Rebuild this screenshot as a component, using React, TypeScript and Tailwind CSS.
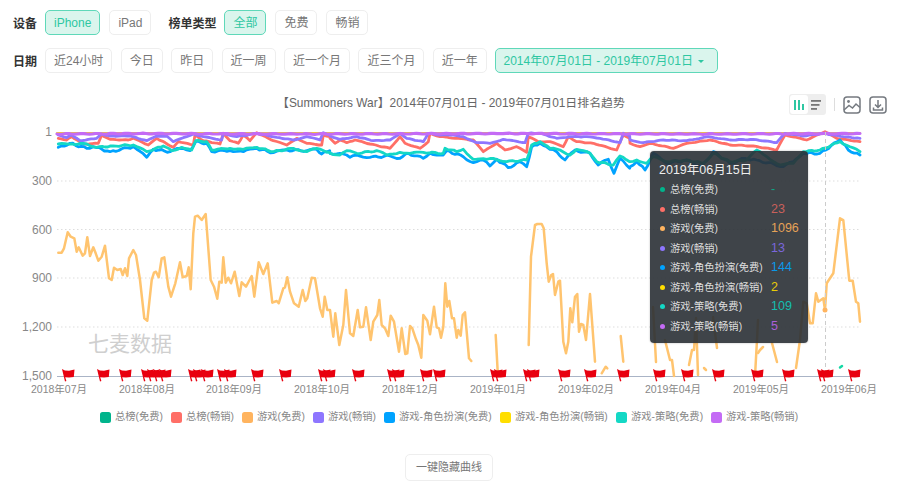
import { clsx } from "clsx";

type Pt = [number, number];

const FONT = "font-['Liberation_Sans','Noto_Sans_CJK_SC',sans-serif]";

const SERIES = [
  { name: "总榜(免费)", color: "#00b48c", value: "-", valueColor: "#0fa584", legend: "w-[71px]" },
  { name: "总榜(畅销)", color: "#ff6f67", value: "23", valueColor: "#c9605b", legend: "w-[71px]" },
  { name: "游戏(免费)", color: "#ffb45f", value: "1096", valueColor: "#e5a257", legend: "w-[71px]" },
  { name: "游戏(畅销)", color: "#8e76ff", value: "13", valueColor: "#7a66dc", legend: "w-[71px]" },
  { name: "游戏-角色扮演(免费)", color: "#00a3ff", value: "144", valueColor: "#0a98e8", legend: "w-[116px]" },
  { name: "游戏-角色扮演(畅销)", color: "#ffde00", value: "2", valueColor: "#e8cb08", legend: "w-[116px]" },
  { name: "游戏-策略(免费)", color: "#14d8c5", value: "109", valueColor: "#13bfb0", legend: "w-[95px]" },
  { name: "游戏-策略(畅销)", color: "#c46bf5", value: "5", valueColor: "#ab5fd8", legend: "w-[95px]" },
];

const X_LABELS: [string, number][] = [
  ["2018年07月", 59],
  ["2018年08月", 147],
  ["2018年09月", 234],
  ["2018年10月", 322],
  ["2018年12月", 410],
  ["2019年01月", 498],
  ["2019年02月", 586],
  ["2019年04月", 673],
  ["2019年05月", 761],
  ["2019年06月", 849],
];

const Y_LABELS: [string, number][] = [
  ["1", 132],
  ["300", 181],
  ["600", 229.5],
  ["900", 278],
  ["1,200", 327],
  ["1,500", 376],
];

const FLAGS = [
  62, 97, 119, 141, 147, 153, 159, 188, 193, 201, 217, 224, 251, 279, 318, 323,
  352, 387, 392, 420, 433, 490, 494, 523, 527, 558, 584, 617, 653, 681, 712, 751,
  782, 817, 821, 848,
];

// traced from crops, each crop has its own offset at 3x
const from = (pts: Pt[], ox: number, oy: number): Pt[] =>
  pts.map(([x, y]) => [ox + x / 3, oy + y / 3] as Pt);

const joined = (a: Pt[], b: Pt[], c: Pt[]): Pt[] => [
  ...from(a, 30, 120),
  ...from(b, 330, 120),
  ...from(c, 630, 120),
];

// resample with a small fixed wobble, the real series are daily and jagged
const jag = (pts: Pt[], amp: number): string => {
  const out: string[] = [];
  for (let i = 0; i < pts.length - 1; i++) {
    const [x0, y0] = pts[i];
    const [x1, y1] = pts[i + 1];
    const steps = Math.max(1, Math.round((x1 - x0) / 3));
    for (let s = 0; s < steps; s++) {
      const x = x0 + ((x1 - x0) * s) / steps;
      const y = y0 + ((y1 - y0) * s) / steps;
      const wobble = s === 0 ? 0 : Math.sin(x * 1.7) * amp;
      out.push(`${x.toFixed(1)},${(y + wobble).toFixed(1)}`);
    }
  }
  const last = pts[pts.length - 1];
  out.push(`${last[0].toFixed(1)},${last[1].toFixed(1)}`);
  return out.join(" ");
};

const plain = (pts: Pt[]) => pts.map(([x, y]) => `${x.toFixed(1)},${y.toFixed(1)}`).join(" ");

const RED = joined(
  [[85,55],[110,60],[125,50],[160,72],[205,70],[215,45],[240,58],[295,60],[310,55],[355,75],[380,55],[430,82],[445,65],[490,75],[495,45],[520,62],[570,72],[580,40],[600,62],[625,70],[640,45],[660,62],[680,38],[730,62],[770,75],[800,55],[830,70],[875,75],[880,45],[899,50]],
  [[0,55],[15,70],[30,60],[50,68],[75,60],[120,72],[180,85],[210,50],[225,70],[270,85],[295,65],[300,40],[330,50],[430,60],[460,95],[500,70],[525,90],[560,80],[590,97],[595,50],[625,65],[660,65],[700,80],[715,50],[740,65],[790,70],[860,90],[880,45],[899,55]],
  [[0,70],[30,80],[60,70],[130,85],[170,70],[240,60],[300,75],[370,78],[440,90],[465,45],[530,60],[585,35],[620,55],[690,65]],
);

const LILAC = joined(
  [[85,45],[110,53],[125,45],[150,62],[200,55],[215,42],[240,48],[300,48],[350,62],[380,48],[410,48],[430,65],[470,50],[490,42],[520,50],[575,60],[580,40],[620,50],[680,40],[740,52],[790,60],[830,50],[870,60],[880,38],[899,45]],
  [[0,48],[30,58],[80,50],[130,62],[180,60],[210,40],[230,55],[280,65],[295,40],[330,45],[360,45],[400,50],[440,68],[480,70],[520,58],[585,68],[595,40],[630,40],[680,55],[720,50],[770,50],[810,55],[870,68],[880,40],[899,48]],
  [[0,60],[40,68],[100,60],[170,62],[235,50],[300,60],[370,58],[440,68],[465,40],[520,48],[580,40],[640,50],[690,55]],
);

const BLUE = joined(
  [[85,82],[120,70],[170,85],[190,80],[240,95],[310,80],[350,112],[370,88],[420,95],[450,85],[480,92],[497,65],[530,70],[545,95],[600,92],[640,95],[680,85],[730,98],[770,90],[830,92],[860,88],[875,102],[899,92]],
  [[0,100],[30,100],[60,112],[80,105],[120,112],[180,108],[210,115],[235,100],[280,115],[300,100],[340,105],[350,92],[400,110],[430,128],[460,120],[480,138],[500,118],[535,143],[570,125],[590,140],[605,80],[630,70],[660,88],[680,95],[705,120],[735,90],[780,100],[805,135],[835,118],[852,160],[870,115],[899,145]],
  [[0,140],[20,125],[45,150],[70,100],[110,130],[170,120],[215,140],[250,95],[300,130],[345,115],[380,120],[460,140],[490,125],[520,100],[570,100],[630,60],[655,90],[690,105]],
);

const TEAL = joined(
  [[85,72],[125,72],[170,72],[200,82],[250,78],[310,75],[350,95],[400,78],[425,92],[455,82],[485,90],[497,62],[530,65],[545,90],[600,85],[640,88],[680,82],[730,95],[790,85],[830,95],[860,85],[899,97]],
  [[0,100],[30,105],[50,92],[80,100],[140,92],[170,105],[210,97],[240,100],[280,97],[340,100],[345,85],[380,95],[400,88],[430,118],[470,118],[490,115],[530,125],[590,120],[605,75],[630,65],[660,85],[690,90],[720,105],[740,88],[780,100],[800,125],[850,135],[870,108],[899,125]],
  [[0,125],[20,120],[50,130],[70,110],[110,125],[170,120],[220,130],[250,100],[300,125],[350,120],[380,90],[410,110],[450,135],[490,130],[520,95],[570,90],[630,65],[660,80],[690,95]],
);

const ORANGE: Pt[][] = [
  [
    ...from(
      [[85,158],[95,158],[102,145],[113,97],[122,110],[133,115],[140,155],[146,142],[158,167],[165,160],[172,112],[180,168],[190,142],[197,160],[205,182],[215,170],[225,137],[237,235],[245,240],[252,203],[262,210],[272,207],[278,225],[285,205],[292,228],[297,175],[310,150],[318,165],[330,240],[343,355],[352,362],[365,240],[372,218],[378,215],[386,232],[395,175],[403,172],[415,260],[423,290],[436,250],[450,187],[458,232],[470,228],[476,202],[482,268],[490,100],[495,50],[503,47],[515,60],[527,42],[542,240],[552,260],[562,296],[568,245],[575,248],[580,172],[587,248],[595,233],[603,250],[614,215],[628,288],[635,247],[648,260],[665,228],[673,290],[686,187],[700,222],[713,190],[727,308],[740,303],[746,310],[760,265],[765,262],[772,232],[780,275],[792,310],[806,320],[818,270],[826,303],[832,295],[845,233],[855,235],[870,325],[878,350],[884,290],[892,330],[898,330]],
      30,
      200,
    ),
    ...from(
      [[0,330],[10,410],[16,340],[28,435],[40,375],[48,270],[60,400],[70,408],[83,330],[90,382],[100,380],[108,322],[122,420],[130,365],[142,345],[148,300],[155,375],[165,385],[175,408],[182,347],[192,365],[207,455],[215,385],[226,462],[232,460],[240,378],[247,385],[258,418],[265,435],[274,473],[280,345],[292,362],[300,403],[312,320],[320,382],[327,385],[333,413],[340,380],[346,250],[352,320],[358,303],[366,355],[372,355],[380,413],[385,390],[392,407],[398,345],[405,337],[417,475],[424,483]],
      330,
      200,
    ),
  ],
  from([[497,405],[503,515]], 330, 200),
  from(
    [[596,435],[603,170],[615,75],[622,72],[635,72],[641,85],[650,190],[656,245],[664,225],[669,222],[675,285],[685,245],[690,242],[700,425],[708,460],[715,425],[721,325],[727,367],[735,290],[742,282],[747,395],[753,372],[760,375],[768,420],[780,282],[795,485]],
    330,
    200,
  ),
  from([[815,520],[827,500],[832,505]], 330, 200),
  from([[872,408],[880,485]], 330, 200),
  [[653,307],[656,362]],
  [[665,340],[670,360],[672,360],[674,376]],
  [[689,365],[692,350],[694,350],[696,318],[698,375]],
  [[704,368],[706,370]],
  [[713,317],[717,348]],
  [[755,376],[757,340],[758,320]],
  [[758,353],[760,350],[763,347]],
  [[772,343],[777,362]],
  [
    [796,368],[800,340],
    ...from(
      [[520,545],[530,550],[540,610],[548,610],[558,520],[565,545],[580,535],[585,570],[590,490],[610,460],[630,295],[640,300],[658,482],[668,482],[678,545],[685,550],[690,605]],
      630,
      120,
    ),
  ],
];

const Pill = ({ label, active }: { label: string; active?: boolean }) => (
  <button
    className={clsx(
      "flex h-[25px] items-center rounded-[5px] border-[1.5px] px-[8px] text-[12px] whitespace-nowrap",
      active
        ? "border-[#5fd8b9] bg-[#daf5ed] text-[#2ec7a2]"
        : "border-[#eeeeee] bg-white text-[#777777]",
    )}
  >
    {label}
  </button>
);

const RowLabel = ({ text, className }: { text: string; className?: string }) => (
  <span className={clsx("text-[12px] font-bold text-[#333333]", className)}>{text}</span>
);

const Flag = ({ x }: { x: number }) => (
  <path
    transform={`translate(${x} 369)`}
    d="M0 0 L3 1.5 L7 1.8 L12.5 0.5 L11.8 8 L7 8.5 L3.2 8.2 L4.4 12 L3 12.4 Z"
    fill="#e8000f"
  />
);

const Chart = () => (
  <svg className="block" width={900} height={280} viewBox="0 120 900 280">
    {[181, 229.5, 278, 327].map((y) => (
      <line key={y} x1={57} x2={860} y1={y} y2={y} stroke="#dddddd" strokeWidth={1} strokeDasharray="1.5 2.5" />
    ))}
    <line x1={57} x2={860} y1={376.5} y2={376.5} stroke="#aab4c6" strokeWidth={1} />
    {Y_LABELS.map(([label, y]) => (
      <text key={label} x={52} y={y + 4} textAnchor="end" fontSize={12} fill="#888888">
        {label}
      </text>
    ))}
    {X_LABELS.map(([label, x]) => (
      <text key={label} x={x} y={392.5} textAnchor="middle" fontSize={10.5} fill="#888888">
        {label}
      </text>
    ))}
    <text x={88} y={351} fontSize={21} fill="#cfcfcf">
      七麦数据
    </text>
    <g fill="none" strokeLinejoin="round" strokeLinecap="round" strokeWidth={2.5}>
      {ORANGE.map((pts, i) => (
        <polyline key={i} points={plain(pts)} stroke="#ffc46f" />
      ))}
      <polyline points="57,133 860,133" stroke="#ffde00" strokeWidth={2} />
      <polyline points={jag(RED, 0.3)} stroke="#ff6f67" strokeWidth={2.8} />
      <polyline points={jag(BLUE, 1)} stroke="#00a3ff" strokeWidth={2.8} />
      <polyline points={jag(TEAL, 0.7)} stroke="#14d8c5" strokeWidth={2.8} />
      <polyline points={jag(LILAC, 0.3)} stroke="#8e76ff" strokeWidth={2.8} />
      <polyline
        points={jag(
          [
            [57, 134],
            [140, 133.5],
            [300, 134],
            [500, 133.5],
            [700, 134],
            [860, 133.5],
          ],
          0.3,
        )}
        stroke="#c46bf5"
        strokeWidth={3.2}
      />
      <line x1={840} y1={367.5} x2={842} y2={366} stroke="#14d8a5" />
    </g>
    <line x1={825.5} x2={825.5} y1={132} y2={376} stroke="#cccccc" strokeDasharray="4 3" />
    <circle cx={825} cy={310} r={2.5} fill="#ffb45f" />
    {FLAGS.map((x, i) => (
      <Flag key={i} x={x} />
    ))}
  </svg>
);

const Tooltip = () => (
  <div className="absolute top-[31px] left-[650px] h-[192px] w-[158px] rounded-[4px] bg-[#2a3035]/90 pt-[11px] pl-[9px] shadow-[0_0_2px_rgba(0,0,0,0.3)]">
    <div className="mb-[2px] text-[12.5px] leading-[16px] text-[#eeeeee]">2019年06月15日</div>
    {SERIES.map((s) => (
      <div key={s.name} className="flex h-[19.5px] items-center">
        <span className="mr-[5px] ml-[1px] size-[5px] rounded-full" style={{ backgroundColor: s.color }} />
        <span className="w-[101px] text-[10.3px] whitespace-nowrap text-[#dddddd]">{s.name}</span>
        <span className="text-[12.5px]" style={{ color: s.valueColor }}>
          {s.value}
        </span>
      </div>
    ))}
  </div>
);

const ChartTools = () => (
  <div className="absolute top-0 left-[789px] flex h-[21px] items-center">
    <div className="flex h-[21px] w-[37px] items-center rounded-[3px] bg-[#eeeeee] p-[1px]">
      <div className="flex h-[19px] w-[18px] items-center justify-center rounded-[3px] bg-white">
        <svg width={12} height={12} viewBox="0 0 12 12" fill="#2ec7a2">
          <rect x={1} y={1} width={2} height={10} />
          <rect x={5} y={1} width={2} height={10} />
          <rect x={9} y={5} width={2} height={6} />
        </svg>
      </div>
      <div className="flex w-[18px] items-center justify-center">
        <svg width={12} height={12} viewBox="0 0 12 12" fill="#777777">
          <rect x={1} y={1} width={10} height={1.8} />
          <rect x={1} y={5} width={8.5} height={1.8} />
          <rect x={1} y={9} width={6} height={1.8} />
        </svg>
      </div>
    </div>
    <div className="mx-[8px] h-[13px] w-px bg-[#dddddd]" />
    <svg width={18} height={18} viewBox="0 0 18 18" fill="none" stroke="#757a80" strokeWidth={1.5}>
      <rect x={1} y={1} width={16} height={16} rx={3} />
      <circle cx={5.5} cy={5.5} r={1.4} fill="#757a80" stroke="none" />
      <path d="M1 14 L6 9.5 L9.5 12 L13 8 L17 11.5" />
    </svg>
    <svg className="ml-[8px]" width={18} height={18} viewBox="0 0 18 18" fill="none" stroke="#757a80" strokeWidth={1.5}>
      <rect x={1} y={1} width={16} height={16} rx={3} />
      <path d="M9 4 V11 M6 8.5 L9 11.5 L12 8.5 M4.5 11.5 V14 H13.5 V11.5" />
    </svg>
  </div>
);

export default function App() {
  return (
    <div className={clsx("h-[496px] w-[900px] overflow-hidden bg-white", FONT)}>
      <div className="flex h-[48px] items-start pt-[10px] pl-[13px]">
        <RowLabel text="设备" className="mt-[5px] mr-[8px]" />
        <div className="flex gap-[9px]">
          <Pill label="iPhone" active />
          <Pill label="iPad" />
        </div>
        <RowLabel text="榜单类型" className="mt-[5px] mr-[8px] ml-[17px]" />
        <div className="flex gap-[9px]">
          <Pill label="全部" active />
          <Pill label="免费" />
          <Pill label="畅销" />
        </div>
      </div>
      <div className="flex h-[44px] items-start pl-[13px]">
        <RowLabel text="日期" className="mt-[5px] mr-[8px]" />
        <div className="flex gap-[8.4px]">
          <Pill label="近24小时" />
          <Pill label="今日" />
          <Pill label="昨日" />
          <Pill label="近一周" />
          <Pill label="近一个月" />
          <Pill label="近三个月" />
          <Pill label="近一年" />
          <button className="flex h-[25px] w-[223px] items-center justify-center gap-[5px] rounded-[5px] border-[1.5px] border-[#5fd8b9] bg-[#daf5ed] pr-[6px] text-[12px] text-[#2ec7a2]">
            2014年07月01日 - 2019年07月01日
            <span className="mt-[1px] border-x-[3.5px] border-t-[3.5px] border-x-transparent border-t-[#2ec7a2]" />
          </button>
        </div>
      </div>
      <div className="relative h-[28px]">
        <div className="pt-[3px] pl-[277px] text-[11.9px] leading-[16px] whitespace-nowrap text-[#666666]">
          【Summoners War】2014年07月01日 - 2019年07月01日排名趋势
        </div>
        <div className="absolute top-[2px] left-0 w-full">
          <ChartTools />
        </div>
      </div>
      <div className="relative">
        <Chart />
        <Tooltip />
      </div>
      <div className="mt-[11px] flex pl-[100px]">
        {SERIES.map((s) => (
          <div key={s.name} className={clsx("flex items-center gap-[4px]", s.legend)}>
            <span className="size-[11px] rounded-[2.5px]" style={{ backgroundColor: s.color }} />
            <span className="text-[10.3px] leading-[12px] whitespace-nowrap text-[#888888]">{s.name}</span>
          </div>
        ))}
      </div>
      <div className="mt-[31px] flex justify-center pr-[2px]">
        <button className="h-[27px] w-[88px] rounded-[5px] border-[1.5px] border-[#eeeeee] text-[11px] text-[#777777]">
          一键隐藏曲线
        </button>
      </div>
    </div>
  );
}
